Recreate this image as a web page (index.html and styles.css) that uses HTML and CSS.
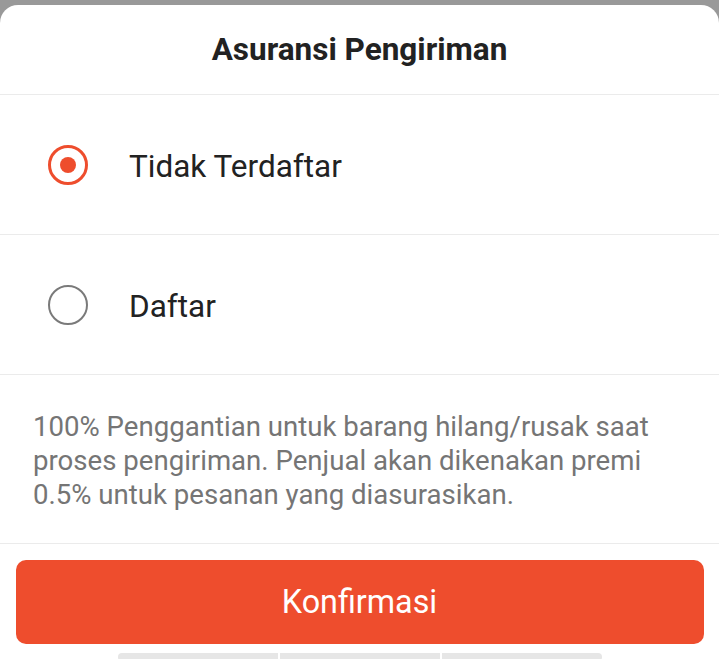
FILE: index.html
```html
<!DOCTYPE html>
<html lang="id">
<head>
<meta charset="utf-8">
<link rel="stylesheet" href="styles.css">
</head>
<body>
<div class="sheet">
  <div class="header">Asuransi Pengiriman</div>
  <div class="option">
    <span class="radio checked"></span>
    <span class="label">Tidak Terdaftar</span>
  </div>
  <div class="option">
    <span class="radio"></span>
    <span class="label">Daftar</span>
  </div>
  <div class="info">100% Penggantian untuk barang hilang/rusak saat proses pengiriman. Penjual akan dikenakan premi 0.5% untuk pesanan yang diasurasikan.</div>
  <div class="footer">
    <button class="confirm">Konfirmasi</button>
    <div class="handle"><span></span><span></span><span></span></div>
  </div>
</div>
</body>
</html>
```
FILE: styles.css
```css
html, body {
  margin: 0;
  padding: 0;
  background: #999999;
  height: 100%;
  overflow: hidden;
}
body {
  padding-top: 5px;
  box-sizing: border-box;
  font-family: Roboto, "Noto Sans", sans-serif;
}
.sheet {
  background: #ffffff;
  border-radius: 18px 18px 0 0;
  height: 654px;
  display: flex;
  flex-direction: column;
}
.header {
  height: 90px;
  flex-shrink: 0;
  box-sizing: border-box;
  border-bottom: 1px solid #ebebeb;
  display: flex;
  align-items: center;
  justify-content: center;
  font-size: 31.5px;
  font-weight: 700;
  color: #222222;
}
.option {
  height: 140px;
  flex-shrink: 0;
  box-sizing: border-box;
  border-bottom: 1px solid #ebebeb;
  display: flex;
  align-items: center;
  padding-left: 48px;
}
.radio {
  width: 40px;
  height: 40px;
  box-sizing: border-box;
  border-radius: 50%;
  border: 2px solid #7a7a7a;
  display: flex;
  align-items: center;
  justify-content: center;
  margin-right: 41px;
}
.radio.checked {
  border: 3px solid #ee4d2d;
}
.radio.checked::after {
  content: "";
  width: 16px;
  height: 16px;
  border-radius: 50%;
  background: #ee4d2d;
}
.label {
  font-size: 31.5px;
  color: #222222;
  padding-top: 3px;
}
.info {
  height: 169px;
  flex-shrink: 0;
  box-sizing: border-box;
  border-bottom: 1px solid #ebebeb;
  padding: 35px 33px 0 33px;
  font-size: 27.6px;
  line-height: 34px;
  color: #757575;
}
.footer {
  flex: 1;
  display: flex;
  flex-direction: column;
  align-items: center;
  padding-top: 16px;
}
.confirm {
  flex-shrink: 0;
  width: 688px;
  height: 84px;
  border: none;
  border-radius: 10px;
  background: #ee4d2d;
  color: #ffffff;
  font-family: Roboto, "Noto Sans", sans-serif;
  font-size: 32.3px;
}
.handle {
  margin-top: 9px;
  display: flex;
  gap: 2px;
}
.handle span {
  width: 160px;
  height: 8px;
  background: #e6e6e6;
}
.handle span:first-child { border-radius: 4px 0 0 4px; }
.handle span:last-child { border-radius: 0 4px 4px 0; }
```
